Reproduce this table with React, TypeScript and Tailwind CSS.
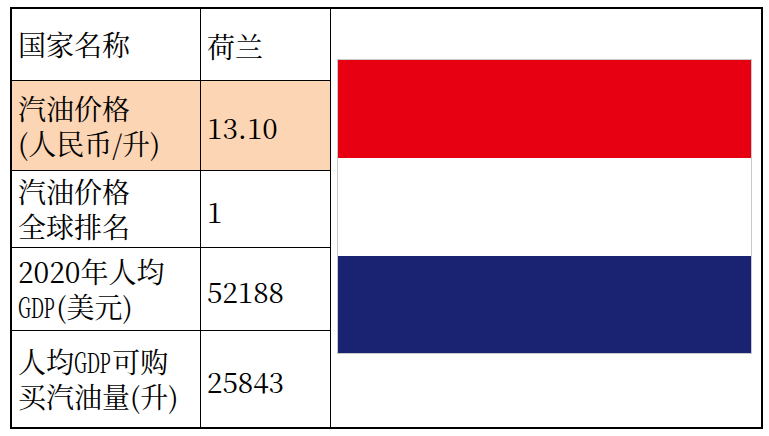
import React from "react";

const font = {
  fontFamily:
    '"Noto Serif CJK SC", "Liberation Serif", "Noto Sans CJK SC", serif',
};

function GDP() {
  return (
    <span className="inline-block origin-left scale-x-[0.62] mr-[-21px]">GDP</span>
  );
}

type Row = { h: string; bg?: string; left: React.ReactNode; right: string; last?: boolean };

export default function App() {
  const rows: Row[] = [
    { h: "h-[72px]", left: <div>国家名称</div>, right: "荷兰" },
    {
      h: "h-[90px]",
      bg: "bg-[#fcd5b4]",
      left: (
        <>
          <div>汽油价格</div>
          <div>(人民币/升)</div>
        </>
      ),
      right: "13.10",
    },
    {
      h: "h-[77px]",
      left: (
        <>
          <div>汽油价格</div>
          <div>全球排名</div>
        </>
      ),
      right: "1",
    },
    {
      h: "h-[83px]",
      left: (
        <>
          <div>2020年人均</div>
          <div>
            <GDP />(美元)
          </div>
        </>
      ),
      right: "52188",
    },
    {
      h: "h-[96px]",
      last: true,
      left: (
        <>
          <div>
            人均<GDP />可购
          </div>
          <div>买汽油量(升)</div>
        </>
      ),
      right: "25843",
    },
  ];

  return (
    <div className="w-[769px] h-[436px] bg-white pt-[7px] pl-[10px]" style={font}>
      <div className="flex w-[753px] h-[422px] border-2 border-black text-black text-[28px] leading-[35px]">
        <div className="flex flex-col">
          {rows.map((r, i) => (
            <div
              key={i}
              className={`flex ${r.h} ${r.bg ?? ""} ${r.last ? "" : "border-b border-black"}`}
            >
              <div className="w-[189px] border-r border-black flex flex-col justify-center pl-[6px] whitespace-nowrap">
                {r.left}
              </div>
              <div className="w-[130px] border-r border-black flex items-center pl-[6px] pt-[4px]">
                {r.right}
              </div>
            </div>
          ))}
        </div>
        <div className="w-[430px] pt-[50px] pl-[6px]">
          <div className="w-[415px] h-[295px] flex flex-col border border-[#c9c9c9]">
            <div className="h-[98px] bg-[#e60012]" />
            <div className="h-[98px] bg-white" />
            <div className="flex-1 bg-[#1a2371]" />
          </div>
        </div>
      </div>
    </div>
  );
}
